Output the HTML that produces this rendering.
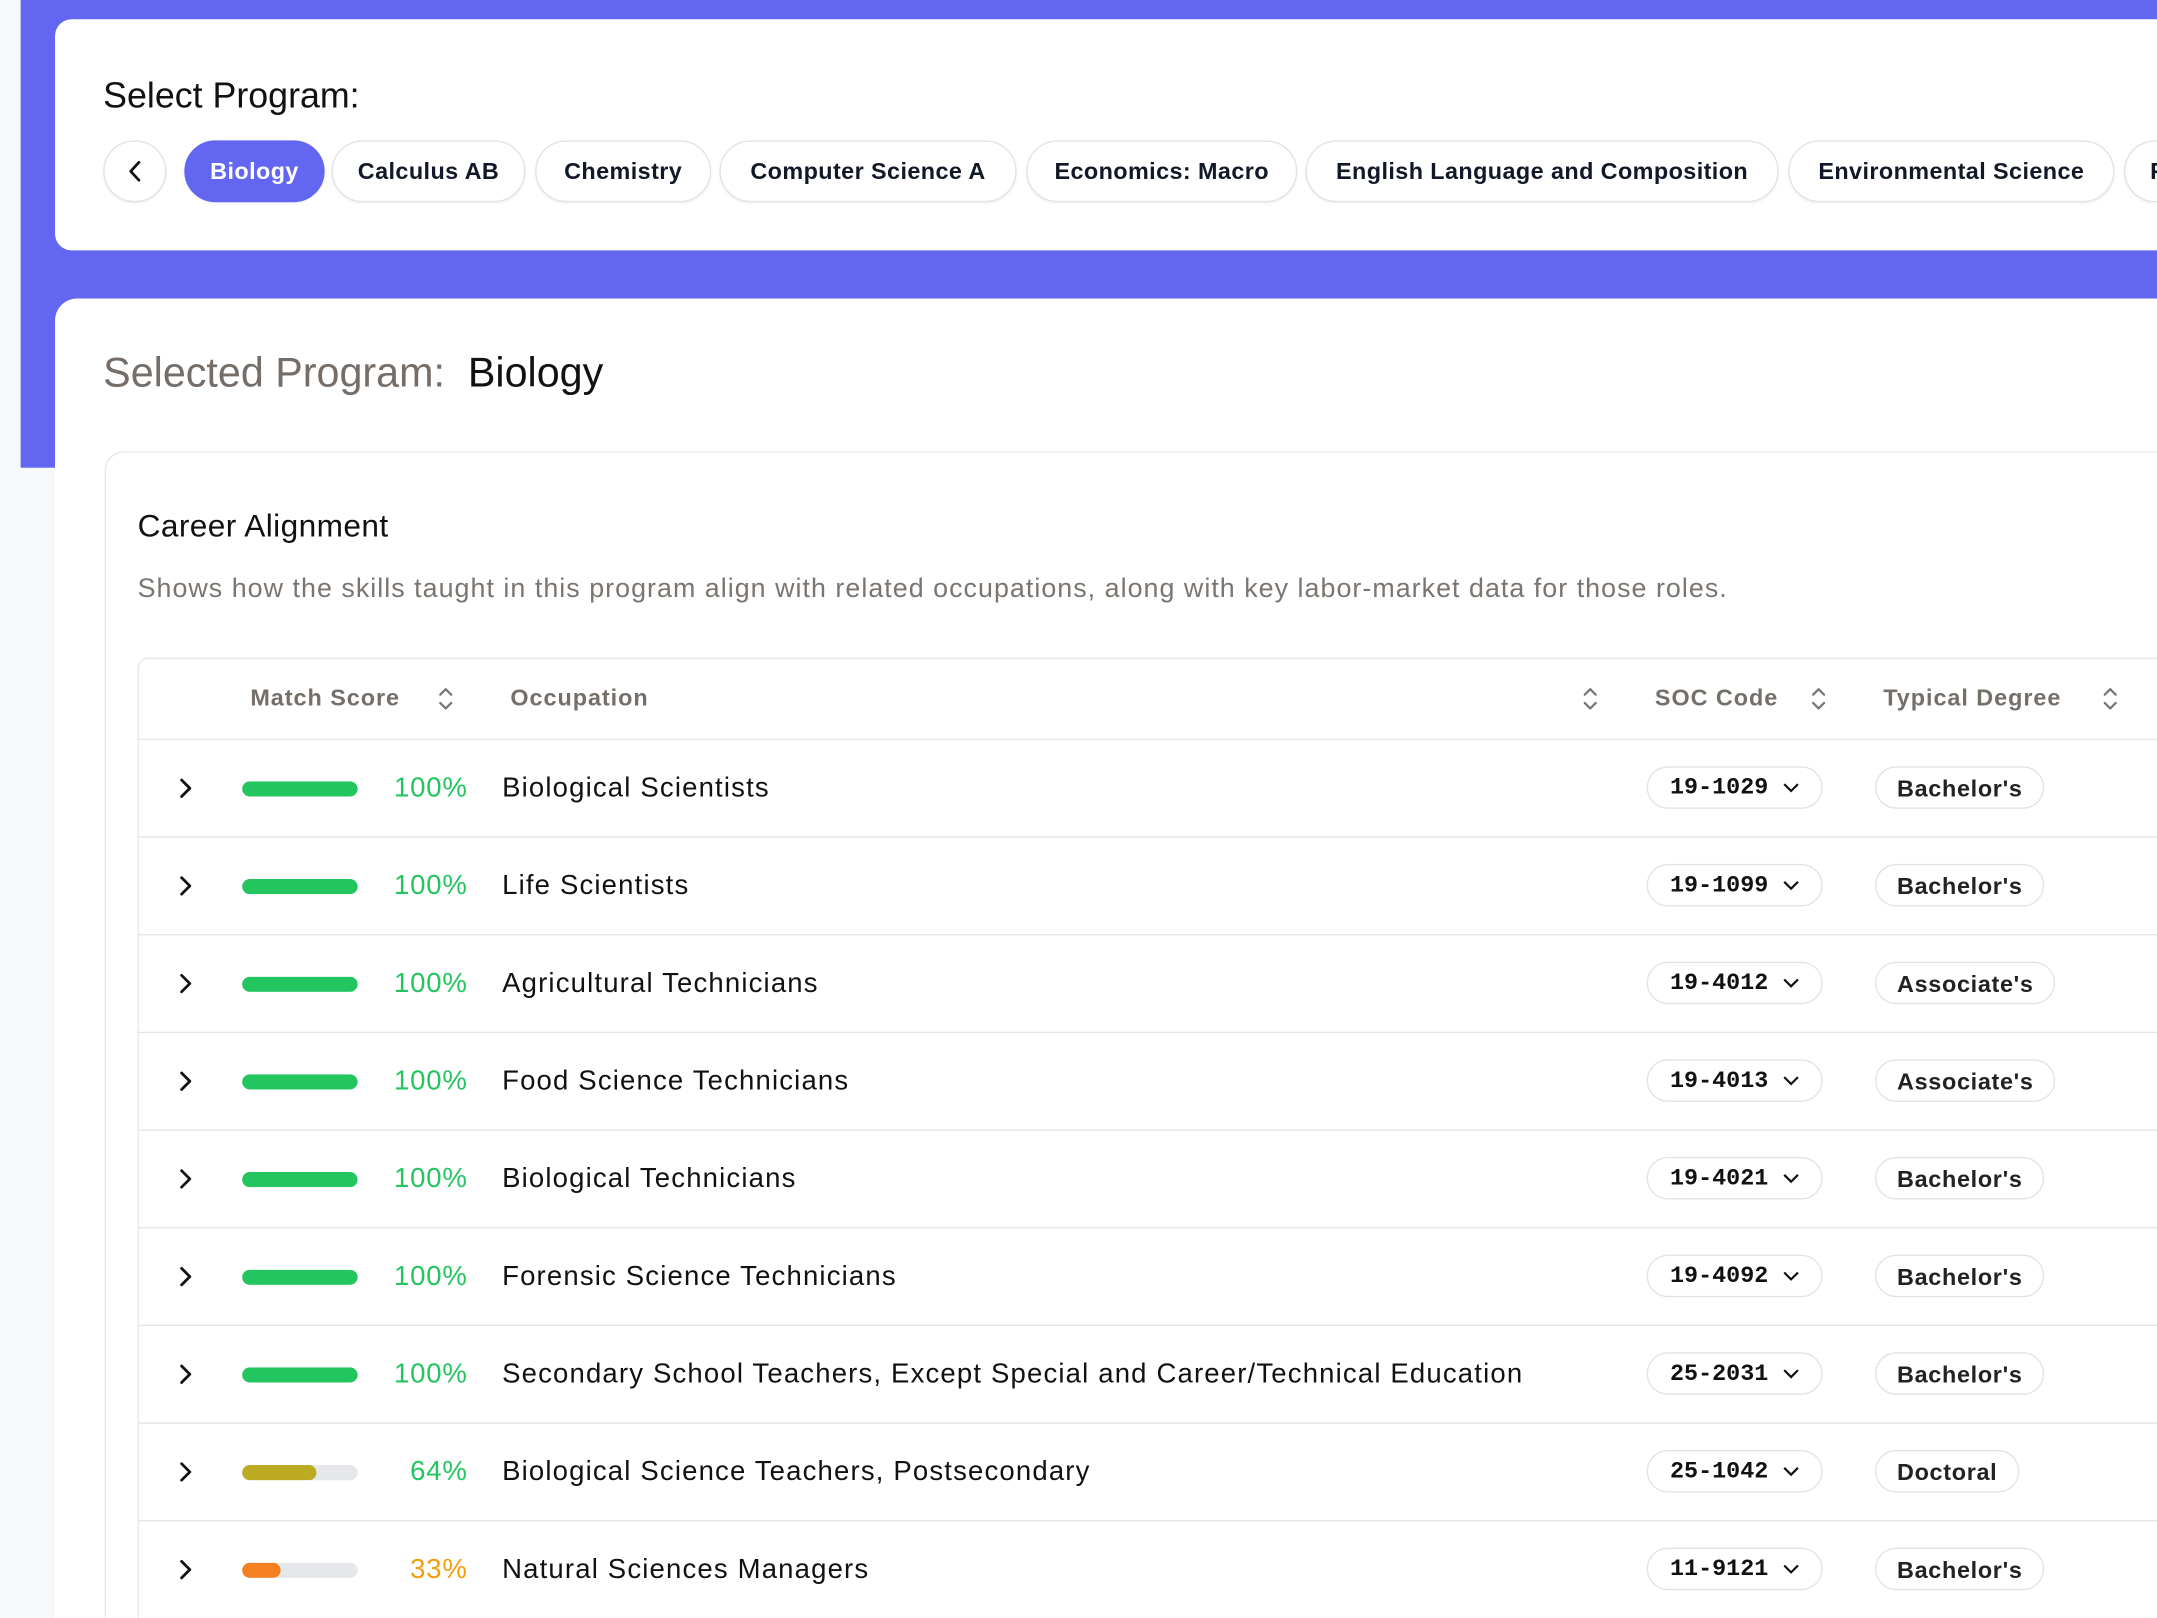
<!DOCTYPE html>
<html><head><meta charset="utf-8"><style>
html,body{margin:0;padding:0;width:2157px;height:1618px;overflow:hidden;background:#f7f8fa;}
#w{position:absolute;left:0;top:0;width:1568px;height:1176px;overflow:hidden;transform:scale(1.37564);transform-origin:0 0;font-family:"Liberation Sans",sans-serif;color:#111;}
.abs{position:absolute}
.pill{position:absolute;top:102px;height:43px;border:1px solid #e3e3e3;border-radius:23px;background:#fff;font-weight:bold;font-size:17px;line-height:43px;text-align:center;box-shadow:0 1px 2px rgba(0,0,0,.06);color:#111827;letter-spacing:0.3px}
.row{position:absolute;left:100px;width:1468px;height:70px;border-top:1px solid #e5e5e5;}
.row .chev{position:absolute;left:28px;top:26px}
.bar{position:absolute;left:76px;top:30px;width:84px;height:11px;border-radius:6px;background:#e5e7eb;overflow:hidden}
.bar i{display:block;height:100%;border-radius:6px}
.pct{position:absolute;left:160px;width:80px;text-align:right;top:24px;font-size:20px;color:#22c55e;letter-spacing:0.6px}
.occ{position:absolute;left:265px;top:24px;font-size:20px;color:#111;letter-spacing:0.85px}
.soc{position:absolute;left:1097px;top:19px;width:128px;height:31px;border:1px solid #e3e3e3;border-radius:16px;font-family:"Liberation Mono",monospace;font-weight:bold;font-size:17px;line-height:31px;padding-left:16px;box-sizing:border-box}
.soc svg{position:absolute;right:16px;top:11px}
.deg{position:absolute;left:1263px;top:19px;height:31px;border:1px solid #e3e3e3;border-radius:16px;font-size:17px;line-height:31px;padding:0 15px;box-sizing:border-box;font-weight:bold;color:#222;letter-spacing:0.5px}
.hd{position:absolute;top:498px;font-size:17px;font-weight:bold;color:#756f6a;letter-spacing:0.7px}
.sort{position:absolute;top:498px}
</style></head><body><div id="w">
<div class="abs" style="left:15px;top:0;width:1553px;height:340px;background:#6366f1"></div>
<div class="abs" style="left:40px;top:14px;width:1528px;height:168px;background:#fff;border-radius:12px 0 0 12px"></div>
<div class="abs" style="left:75px;top:54px;font-size:26px;color:#111">Select Program:</div>
<div class="pill" style="left:75px;width:44px;padding:0"><svg width="44" height="43" viewBox="0 0 44 43"><path d="M25 15l-6 6.5 6 6.5" fill="none" stroke="#111" stroke-width="2" stroke-linecap="round" stroke-linejoin="round"/></svg></div>
<div class="pill" style="left:134px;width:100px;background:#6366f1;border-color:#6366f1;color:#fff">Biology</div>
<div class="pill" style="left:241px;width:139px">Calculus AB</div>
<div class="pill" style="left:389px;width:126px">Chemistry</div>
<div class="pill" style="left:523px;width:214px">Computer Science A</div>
<div class="pill" style="left:746px;width:195px">Economics: Macro</div>
<div class="pill" style="left:949px;width:342px">English Language and Composition</div>
<div class="pill" style="left:1300px;width:235px">Environmental Science</div>
<div class="pill" style="left:1544px;width:24px;text-align:left;padding-left:18px;border-right:none;border-radius:23px 0 0 23px;overflow:hidden">F</div>
<div class="abs" style="left:40px;top:217px;width:1528px;height:959px;background:#fff;border-radius:16px 0 0 0"></div>
<div class="abs" style="left:75px;top:255px;font-size:30px;color:#746d68">Selected Program:&nbsp; <span style="color:#111">Biology</span></div>
<div class="abs" style="left:76px;top:328px;width:1492px;height:848px;box-sizing:border-box;border:1px solid #e6e6e6;border-right:none;border-bottom:none;border-radius:14px 0 0 0"></div>
<div class="abs" style="left:100px;top:369px;font-size:23px;color:#111;letter-spacing:0.3px">Career Alignment</div>
<div class="abs" style="left:100px;top:417px;font-size:19.5px;color:#7a7570;letter-spacing:0.75px">Shows how the skills taught in this program align with related occupations, along with key labor-market data for those roles.</div>
<div class="abs" style="left:100px;top:478px;width:1468px;height:698px;box-sizing:border-box;border:1px solid #e6e6e6;border-right:none;border-bottom:none;border-radius:8px 0 0 0"></div>
<div class="hd" style="left:182px">Match Score</div>
<div class="hd" style="left:371px">Occupation</div>
<div class="hd" style="left:1203px">SOC Code</div>
<div class="hd" style="left:1369px">Typical Degree</div>
<svg class="sort" style="left:317px" width="14" height="20" viewBox="0 0 14 20"><path d="M3 7l4-4 4 4M3 13l4 4 4-4" fill="none" stroke="#777" stroke-width="1.6" stroke-linecap="round" stroke-linejoin="round"/></svg>
<svg class="sort" style="left:1149px" width="14" height="20" viewBox="0 0 14 20"><path d="M3 7l4-4 4 4M3 13l4 4 4-4" fill="none" stroke="#777" stroke-width="1.6" stroke-linecap="round" stroke-linejoin="round"/></svg>
<svg class="sort" style="left:1315px" width="14" height="20" viewBox="0 0 14 20"><path d="M3 7l4-4 4 4M3 13l4 4 4-4" fill="none" stroke="#777" stroke-width="1.6" stroke-linecap="round" stroke-linejoin="round"/></svg>
<svg class="sort" style="left:1527px" width="14" height="20" viewBox="0 0 14 20"><path d="M3 7l4-4 4 4M3 13l4 4 4-4" fill="none" stroke="#777" stroke-width="1.6" stroke-linecap="round" stroke-linejoin="round"/></svg>

<div class="row" style="top:537px"><svg class="chev" width="14" height="18" viewBox="0 0 14 18"><path d="M4 3l6 6-6 6" fill="none" stroke="#111" stroke-width="2" stroke-linecap="round" stroke-linejoin="round"/></svg><div class="bar"><i style="width:100%;background:#22c55e"></i></div><div class="pct">100%</div><div class="occ">Biological Scientists</div><div class="soc">19-1029<svg width="12" height="8" viewBox="0 0 12 8"><path d="M1 1l5 5 5-5" fill="none" stroke="#111" stroke-width="1.6"/></svg></div><div class="deg">Bachelor's</div></div>
<div class="row" style="top:608px"><svg class="chev" width="14" height="18" viewBox="0 0 14 18"><path d="M4 3l6 6-6 6" fill="none" stroke="#111" stroke-width="2" stroke-linecap="round" stroke-linejoin="round"/></svg><div class="bar"><i style="width:100%;background:#22c55e"></i></div><div class="pct">100%</div><div class="occ">Life Scientists</div><div class="soc">19-1099<svg width="12" height="8" viewBox="0 0 12 8"><path d="M1 1l5 5 5-5" fill="none" stroke="#111" stroke-width="1.6"/></svg></div><div class="deg">Bachelor's</div></div>
<div class="row" style="top:679px"><svg class="chev" width="14" height="18" viewBox="0 0 14 18"><path d="M4 3l6 6-6 6" fill="none" stroke="#111" stroke-width="2" stroke-linecap="round" stroke-linejoin="round"/></svg><div class="bar"><i style="width:100%;background:#22c55e"></i></div><div class="pct">100%</div><div class="occ">Agricultural Technicians</div><div class="soc">19-4012<svg width="12" height="8" viewBox="0 0 12 8"><path d="M1 1l5 5 5-5" fill="none" stroke="#111" stroke-width="1.6"/></svg></div><div class="deg">Associate's</div></div>
<div class="row" style="top:750px"><svg class="chev" width="14" height="18" viewBox="0 0 14 18"><path d="M4 3l6 6-6 6" fill="none" stroke="#111" stroke-width="2" stroke-linecap="round" stroke-linejoin="round"/></svg><div class="bar"><i style="width:100%;background:#22c55e"></i></div><div class="pct">100%</div><div class="occ">Food Science Technicians</div><div class="soc">19-4013<svg width="12" height="8" viewBox="0 0 12 8"><path d="M1 1l5 5 5-5" fill="none" stroke="#111" stroke-width="1.6"/></svg></div><div class="deg">Associate's</div></div>
<div class="row" style="top:821px"><svg class="chev" width="14" height="18" viewBox="0 0 14 18"><path d="M4 3l6 6-6 6" fill="none" stroke="#111" stroke-width="2" stroke-linecap="round" stroke-linejoin="round"/></svg><div class="bar"><i style="width:100%;background:#22c55e"></i></div><div class="pct">100%</div><div class="occ">Biological Technicians</div><div class="soc">19-4021<svg width="12" height="8" viewBox="0 0 12 8"><path d="M1 1l5 5 5-5" fill="none" stroke="#111" stroke-width="1.6"/></svg></div><div class="deg">Bachelor's</div></div>
<div class="row" style="top:892px"><svg class="chev" width="14" height="18" viewBox="0 0 14 18"><path d="M4 3l6 6-6 6" fill="none" stroke="#111" stroke-width="2" stroke-linecap="round" stroke-linejoin="round"/></svg><div class="bar"><i style="width:100%;background:#22c55e"></i></div><div class="pct">100%</div><div class="occ">Forensic Science Technicians</div><div class="soc">19-4092<svg width="12" height="8" viewBox="0 0 12 8"><path d="M1 1l5 5 5-5" fill="none" stroke="#111" stroke-width="1.6"/></svg></div><div class="deg">Bachelor's</div></div>
<div class="row" style="top:963px"><svg class="chev" width="14" height="18" viewBox="0 0 14 18"><path d="M4 3l6 6-6 6" fill="none" stroke="#111" stroke-width="2" stroke-linecap="round" stroke-linejoin="round"/></svg><div class="bar"><i style="width:100%;background:#22c55e"></i></div><div class="pct">100%</div><div class="occ">Secondary School Teachers, Except Special and Career/Technical Education</div><div class="soc">25-2031<svg width="12" height="8" viewBox="0 0 12 8"><path d="M1 1l5 5 5-5" fill="none" stroke="#111" stroke-width="1.6"/></svg></div><div class="deg">Bachelor's</div></div>
<div class="row" style="top:1034px"><svg class="chev" width="14" height="18" viewBox="0 0 14 18"><path d="M4 3l6 6-6 6" fill="none" stroke="#111" stroke-width="2" stroke-linecap="round" stroke-linejoin="round"/></svg><div class="bar"><i style="width:64%;background:#bcab22"></i></div><div class="pct">64%</div><div class="occ">Biological Science Teachers, Postsecondary</div><div class="soc">25-1042<svg width="12" height="8" viewBox="0 0 12 8"><path d="M1 1l5 5 5-5" fill="none" stroke="#111" stroke-width="1.6"/></svg></div><div class="deg">Doctoral</div></div>
<div class="row" style="top:1105px"><svg class="chev" width="14" height="18" viewBox="0 0 14 18"><path d="M4 3l6 6-6 6" fill="none" stroke="#111" stroke-width="2" stroke-linecap="round" stroke-linejoin="round"/></svg><div class="bar"><i style="width:33%;background:#f48020"></i></div><div class="pct" style="color:#f59e0b">33%</div><div class="occ">Natural Sciences Managers</div><div class="soc">11-9121<svg width="12" height="8" viewBox="0 0 12 8"><path d="M1 1l5 5 5-5" fill="none" stroke="#111" stroke-width="1.6"/></svg></div><div class="deg">Bachelor's</div></div>
</div></body></html>
